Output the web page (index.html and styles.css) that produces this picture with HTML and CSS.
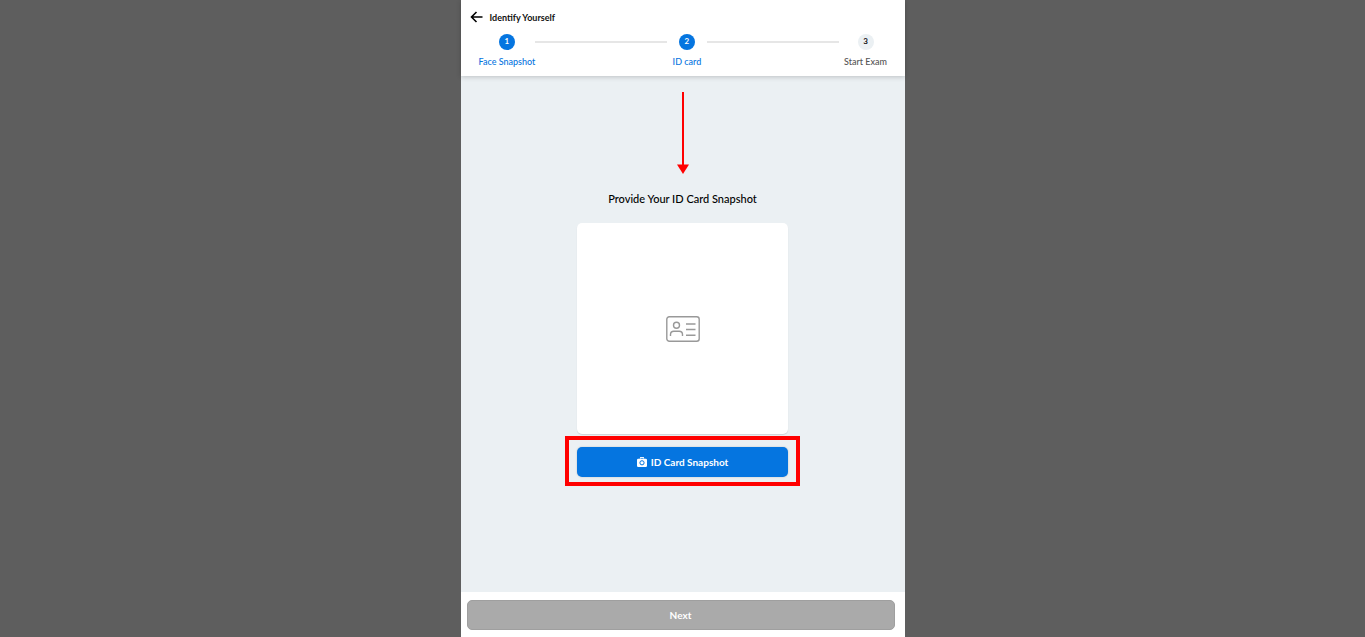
FILE: index.html
```html
<!DOCTYPE html>
<html lang="en">
<head>
    <meta charset="UTF-8">
    <meta name="viewport" content="width=device-width, initial-scale=1">
    <title>Identify Yourself</title>
    <link rel="stylesheet" href="styles.css">
</head>
<body>
    <div class="panel">
        <header class="header">
            <div class="title-bar">
                <button type="button" class="back-btn" aria-label="Back">
                    <svg width="13" height="12" viewBox="0 0 13 12" fill="none" stroke="currentColor" stroke-width="1.6">
                        <path d="M12.5 6H1.5M6.5 1L1.5 6L6.5 11"/>
                    </svg>
                </button>
                <h1 class="title">Identify Yourself</h1>
            </div>
            <div class="steps">
                <div class="step active">
                    <span class="step-number">1</span>
                    <span class="step-label">Face Snapshot</span>
                </div>
                <div class="step-line"></div>
                <div class="step step-middle active">
                    <span class="step-number">2</span>
                    <span class="step-label">ID card</span>
                </div>
                <div class="step-line"></div>
                <div class="step">
                    <span class="step-number">3</span>
                    <span class="step-label">Start Exam</span>
                </div>
            </div>
        </header>

        <main class="content">
            <svg class="arrow" width="12" height="82" viewBox="0 0 12 82">
                <path d="M5 0H7V73H5Z"/>
                <path d="M0 72.5H12L6 82Z"/>
            </svg>
            <h2 class="heading">Provide Your ID Card Snapshot</h2>
            <div class="preview">
                <svg width="34" height="26" viewBox="0 0 34 26" fill="none" stroke="#999" stroke-width="1.4">
                    <rect x="0.8" y="0.8" width="32.4" height="24.4" rx="2.5"/>
                    <circle cx="10.5" cy="9.3" r="3"/>
                    <path d="M4.5 20V18.5C4.5 16.5 6 15.3 7.8 15.3H13.2C15 15.3 16.5 16.5 16.5 18.5V20"/>
                    <path d="M20 8H29.5M20 13.5H29.5M20 19.2H29.5"/>
                </svg>
            </div>
            <div class="highlight">
                <button type="button" class="btn btn-primary">
                    <svg width="10" height="10" viewBox="0 0 10 10">
                        <path fill="#fff" d="M3.2 0H6.8L7.2 1.8H8.8Q10 1.8 10 3V8.8Q10 10 8.8 10H1.2Q0 10 0 8.8V3Q0 1.8 1.2 1.8H2.8Z"/>
                        <circle cx="5" cy="5.8" r="2.1" fill="none" stroke="#0575e0" stroke-width="1"/>
                        <path stroke="#0575e0" stroke-width="0.7" d="M3.4 1.4H6.6"/>
                    </svg>
                    ID Card Snapshot
                </button>
            </div>
        </main>

        <footer class="footer">
            <button type="button" class="btn btn-next" disabled>Next</button>
        </footer>
    </div>
</body>
</html>
```
FILE: styles.css
```css
*, *::before, *::after {
    box-sizing: border-box;
}

html, body {
    height: 100%;
    margin: 0;
}
body {
    background: #5e5e5e;
    font-family: Lato, "Open Sans", sans-serif;
    color: #111;
}
button {
    font-family: inherit;
    border: 0;
    padding: 0;
}
.panel {
    display: flex;
    flex-direction: column;
    max-width: 444px;
    height: 100%;
    margin: 0 auto;
    background: #ebf0f3;
}

.header {
    background: #fff;
    padding: 9px 12px 8px 9px;
    box-shadow: 0 1px 5px rgba(0, 0, 0, 0.2);
}
.title-bar {
    display: flex;
    align-items: center;
    gap: 7px;
    height: 16px;
}
.back-btn {
    display: flex;
    background: none;
    color: #000;
}
.title {
    margin: 0;
    font-size: 9px;
    line-height: 15px;
    font-weight: 700;
}
.steps {
    display: flex;
    align-items: flex-start;
    margin-top: 9px;
    padding-left: 9px;
}
.step {
    display: flex;
    flex-direction: column;
    align-items: center;
    flex: 0 0 54px;
    gap: 6px;
    color: #555;
}
.step-middle {
    flex-basis: 40px;
}
.step-number {
    width: 16px;
    height: 16px;
    border-radius: 50%;
    background: #ebf0f3;
    color: #111;
    font-size: 8px;
    line-height: 15px;
    font-weight: 700;
    text-align: center;
}
.step-label {
    font-size: 9px;
    line-height: 12px;
    font-weight: 500;
    white-space: nowrap;
}
.step.active {
    color: #0575e0;
}
.step.active .step-number {
    background: #0575e0;
    color: #fff;
}
.step-line {
    flex: 1;
    height: 2px;
    margin-top: 7px;
    background: #e6e6e6;
}

.content {
    flex: 1;
    display: flex;
    flex-direction: column;
    align-items: center;
    padding-top: 16px;
}
.arrow {
    fill: #f00;
}
.heading {
    margin: 17px 0 16px;
    font-size: 11px;
    line-height: 16px;
    font-weight: 500;
    color: #000;
}
.preview {
    display: flex;
    align-items: center;
    justify-content: center;
    width: 211px;
    height: 211px;
    background: #fff;
    border-radius: 5px;
    box-shadow: 0 1px 1px rgba(0, 0, 0, 0.12);
}
.highlight {
    margin-top: 2px;
    padding: 7px 8px 5px;
    width: 235px;
    border: 4px solid #f00;
}
.btn {
    display: flex;
    align-items: center;
    justify-content: center;
    gap: 4px;
    width: 100%;
    height: 30px;
    border-radius: 5px;
    color: #fff;
    font-weight: 700;
}
.btn-primary {
    background: #0575e0;
    font-size: 10px;
    box-shadow: 0 0 2px rgba(0, 0, 0, 0.2);
}

.footer {
    padding: 8px 10px 7px 6px;
    background: #fff;
}
.btn-next {
    background: #aaa;
    border: 1px solid #9f9f9f;
    font-size: 10px;
}
```
